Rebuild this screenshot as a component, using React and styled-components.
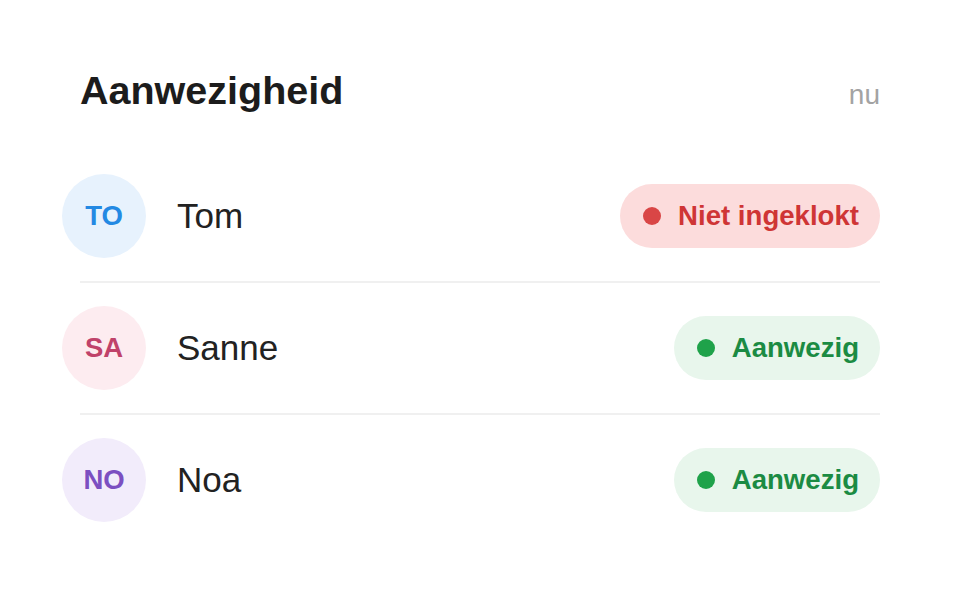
import React from "react";
import styled, { createGlobalStyle } from "styled-components";

const Global = createGlobalStyle`
  html, body { margin: 0; padding: 0; background: #ffffff; }
  body { font-family: "Liberation Sans", Arial, sans-serif; color: #1f1f1f; }
`;

const Card = styled.div`
  width: 960px;
  height: 592px;
  box-sizing: border-box;
  padding: 68px 80px 0 80px;
  background: #fff;
`;

const Header = styled.div`
  display: flex;
  justify-content: space-between;
  align-items: baseline;
  margin-bottom: 39px;
`;

const Title = styled.h1`
  margin: 0;
  font-size: 39.5px;
  line-height: 44px;
  font-weight: 700;
  color: #1c1c1c;
`;

const Stamp = styled.span`
  font-size: 28px;
  color: #a3a3a3;
`;

const List = styled.div`
  display: flex;
  flex-direction: column;
`;

const Row = styled.div`
  display: flex;
  align-items: center;
  padding: 23px 0;
  border-bottom: ${(p) => (p.$last ? "none" : "2px solid #f0f0f0")};
`;

const Avatar = styled.div`
  width: 84px;
  height: 84px;
  border-radius: 50%;
  margin-left: -18px;
  flex: none;
  display: flex;
  align-items: center;
  justify-content: center;
  background: ${(p) => p.$bg};
  color: ${(p) => p.$fg};
  font-size: 27.5px;
  font-weight: 700;
`;

const Name = styled.div`
  flex: 1;
  margin-left: 31px;
  font-size: 35px;
  color: #222;
`;

const Pill = styled.div`
  display: flex;
  align-items: center;
  gap: 17px;
  height: 64px;
  box-sizing: border-box;
  padding: 0 21px 0 23px;
  border-radius: 32px;
  background: ${(p) => p.$bg};
  color: ${(p) => p.$fg};
  font-size: 27.6px;
  font-weight: 700;
`;

const Dot = styled.span`
  width: 18px;
  height: 18px;
  border-radius: 50%;
  background: ${(p) => p.$c};
  flex: none;
`;

const statuses = {
  out: { label: "Niet ingeklokt", bg: "#fcdcdc", fg: "#cf3535", dot: "#d94646" },
  in: { label: "Aanwezig", bg: "#e8f6ec", fg: "#1b8b43", dot: "#1fa24a" },
};

const people = [
  { initials: "TO", name: "Tom", bg: "#e7f2fd", fg: "#2389e3", status: "out" },
  { initials: "SA", name: "Sanne", bg: "#fdecf0", fg: "#c0426a", status: "in" },
  { initials: "NO", name: "Noa", bg: "#f2ecfb", fg: "#7c4fc1", status: "in" },
];

export default function App() {
  return (
    <>
      <Global />
      <Card>
        <Header>
          <Title>Aanwezigheid</Title>
          <Stamp>nu</Stamp>
        </Header>
        <List>
          {people.map((p, i) => {
            const s = statuses[p.status];
            return (
              <Row key={p.name} $last={i === people.length - 1}>
                <Avatar $bg={p.bg} $fg={p.fg}>{p.initials}</Avatar>
                <Name>{p.name}</Name>
                <Pill $bg={s.bg} $fg={s.fg}>
                  <Dot $c={s.dot} />
                  {s.label}
                </Pill>
              </Row>
            );
          })}
        </List>
      </Card>
    </>
  );
}
